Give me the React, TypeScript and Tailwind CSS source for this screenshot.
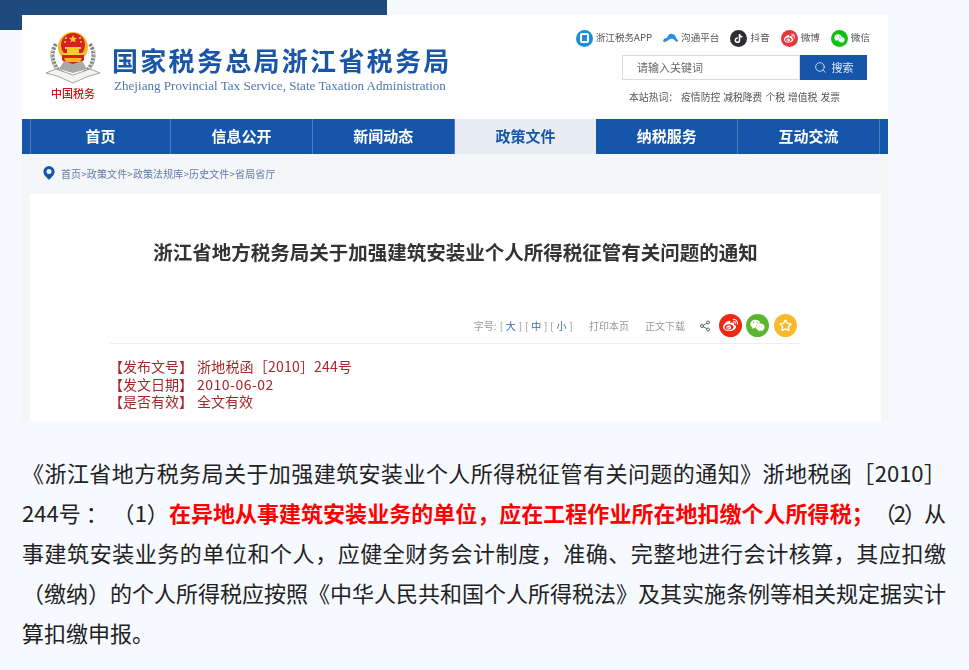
import { Search, Share2, Star } from "lucide-react";
import { FaTiktok, FaWeibo, FaWeixin } from "react-icons/fa";

const cjk = "font-['Microsoft_YaHei','Noto_Sans_CJK_SC',sans-serif]";

function Emblem() {
  return (
    <svg width="54" height="56" viewBox="0 0 54 56" className="block">
      <g fill="none" stroke="#7f8480" strokeWidth="4" strokeDasharray="2.500 1.200">
        <path d="M10 14c-7 11-3 24 9 31" />
        <path d="M44 14c7 11 3 24-9 31" />
      </g>
      <g fill="none" stroke="#c3c6c2" strokeWidth="2.500" strokeDasharray="2 1.500">
        <path d="M6 20c-2 9 2 18 9 24" />
        <path d="M48 20c2 9-2 18-9 24" />
      </g>
      <circle cx="27" cy="17" r="15" fill="#f0b91d" />
      <circle cx="27" cy="15" r="12" fill="#d91f26" />
      <g fill="#f5cf2c">
        <path d="M27 5l1.200 2.700 2.900.2-2.200 1.900.7 2.800-2.600-1.500-2.600 1.500.7-2.800-2.200-1.900 2.900-.2z" />
        <circle cx="20" cy="8" r="1.100" />
        <circle cx="34" cy="8" r="1.100" />
        <circle cx="19" cy="12" r="1" />
        <circle cx="35" cy="12" r="1" />
        <rect x="19" y="17" width="16" height="2" />
        <path d="M21 19h12v4H21z" />
        <rect x="17" y="23" width="20" height="2" />
      </g>
      <path d="M16 25h22v5c-3 3-7 5-11 5s-8-2-11-5z" fill="#d91f26" />
      <path d="M18 28h18l-2 4H20z" fill="#f0b91d" />
      <path d="M27 34l-9-3-5 8 14 4 14-4-5-8z" fill="#a9aaa6" />
      <path d="M0 43l10-4 17 6 17-6 10 4-11 3-16 7-16-7z" fill="#f4f4f1" stroke="#8f918e" strokeWidth="0.800" />
    </svg>
  );
}

function Pin() {
  return (
    <svg width="12" height="14" viewBox="0 0 12 14">
      <path d="M6 0a5.600 5.600 0 0 1 5.600 5.600C11.600 9 8 12 6 14 4 12 .4 9 .4 5.600A5.600 5.600 0 0 1 6 0z" fill="#1555aa" />
      <circle cx="6" cy="5.600" r="2.500" fill="#f5f6f8" />
    </svg>
  );
}

function TopLink({ icon, label }: { icon: React.ReactNode; label: string }) {
  return (
    <div className="flex items-center gap-[3px]">
      {icon}
      <span className="text-[9.600px] leading-none text-[#555]">{label}</span>
    </div>
  );
}

const navItems = ["信息公开", "新闻动态", "政策文件", "纳税服务", "互动交流"];

export default function App() {
  return (
    <div className={`min-h-[670px] bg-[#f6f9fe] ${cjk} overflow-hidden`}>
      <div className="h-[15px] w-[387px] bg-[#1f4a7f]" />
      <div className="flex">
        <div className="h-[15px] w-[22px] bg-[#1f4a7f]" />
        <div className="w-[866px] h-[406px] flex flex-col blur-[0.35px]">
          <header className="h-[104px] bg-white flex justify-between">
            <div className="flex pl-[24px] pt-[15px]">
              <div className="flex flex-col items-center w-[54px]">
                <Emblem />
                <span className="text-[11px] leading-[16px] font-medium text-[#c8161d] whitespace-nowrap -mt-[1px]">中国税务</span>
              </div>
              <div className="ml-[12px] pt-[13px]">
                <div className="text-[26px] leading-[34px] font-bold tracking-[2.300px] text-[#1a56a8] whitespace-nowrap">国家税务总局浙江省税务局</div>
                <div className="font-['Liberation_Serif',serif] text-[13.100px] leading-[16px] text-[#4f77b0] whitespace-nowrap pl-[2px] mt-[1px]">Zhejiang Provincial Tax Service, State Taxation Administration</div>
              </div>
            </div>
            <div className="flex flex-col items-end pt-[14px]">
              <div className="flex items-center gap-[11px] pr-[18px] h-[18px]">
                <TopLink
                  label="浙江税务APP"
                  icon={
                    <span className="w-[17px] h-[17px] rounded-full bg-[#1a8fd8] flex items-center justify-center">
                      <span className="w-[9px] h-[10px] rounded-[2px] border-2 border-white bg-[#1a8fd8]" />
                    </span>
                  }
                />
                <TopLink
                  label="沟通平台"
                  icon={
                    <svg width="15" height="10" viewBox="0 0 15 10">
                      <path d="M0 8c1-3 3-3 4-3 1-3 3-5 5-4 3 0 4 3 4 4 1 1 2 2 2 3-1 1-2 1-3-.5-2-2.500-5-2-7 0-2 1.500-4 2-5 .5z" fill="#2a8de6" />
                    </svg>
                  }
                />
                <TopLink
                  label="抖音"
                  icon={
                    <span className="w-[17px] h-[17px] rounded-full bg-[#2f2f33] flex items-center justify-center">
                      <FaTiktok className="text-white text-[9px]" />
                    </span>
                  }
                />
                <TopLink
                  label="微博"
                  icon={
                    <span className="w-[17px] h-[17px] rounded-full bg-[#e8363e] flex items-center justify-center">
                      <FaWeibo className="text-white text-[11px]" />
                    </span>
                  }
                />
                <TopLink
                  label="微信"
                  icon={
                    <span className="w-[17px] h-[17px] rounded-full bg-[#0fbf12] flex items-center justify-center">
                      <FaWeixin className="text-white text-[11px]" />
                    </span>
                  }
                />
              </div>
              <div className="flex mt-[8px] mr-[21px] h-[25px] w-[245px]">
                <div className="w-[178px] bg-white border border-[#dcdcdc] pl-[14px] flex items-center text-[11px] text-[#666]">请输入关键词</div>
                <div className="flex-1 bg-[#1555aa] flex items-center justify-center gap-[5px] text-[11px] text-[#dbe7f5]">
                  <Search size={13} strokeWidth={1.600} />
                  <span>搜索</span>
                </div>
              </div>
              <div className="flex gap-[3px] mt-[11px] mr-[48px] text-[9.800px] leading-[12px] text-[#555]">
                <span>本站热词：</span>
                <span>疫情防控</span>
                <span>减税降费</span>
                <span>个税</span>
                <span>增值税</span>
                <span>发票</span>
              </div>
            </div>
          </header>
          <nav className="h-[35px] flex bg-[#1555aa] text-white text-[15px] font-bold">
            <div className="w-[9px] border-r border-[#4a7cc0]" />
            <div className="w-[140px] flex items-center justify-center border-r border-[#4a7cc0]">首页</div>
            {navItems.map((n) => (
              <div
                key={n}
                className={
                  n === "政策文件"
                    ? "w-[141.800px] flex items-center justify-center bg-[#e8edf5] text-[#1a56a8]"
                    : "w-[141.800px] flex items-center justify-center border-r border-[#4a7cc0]"
                }
              >
                {n}
              </div>
            ))}
          </nav>
          <main className="flex-1 bg-[#f5f6f8] pl-[8px] pr-[7px] flex flex-col">
            <div className="h-[40px] flex items-center pl-[13px] pb-[2px] gap-[6px] text-[10px] text-[#5f7ba8]">
              <Pin />
              <span className="whitespace-nowrap tracking-[0.1px]">首页&gt;政策文件&gt;政策法规库&gt;历史文件&gt;省局省厅</span>
            </div>
            <section className="flex-1 bg-white">
              <h1 className="pt-[44px] text-[19.500px] leading-[28px] font-bold text-[#333] text-center whitespace-nowrap">
                浙江省地方税务局关于加强建筑安装业个人所得税征管有关问题的通知
              </h1>
              <div className="mx-[80px] mt-[48px] h-[30px] pb-[6px] border-b border-[#eeeeee] flex items-center justify-end pr-[4px] text-[10px] text-[#999]">
                <span>字号:</span>
                <span className="ml-[3px] whitespace-nowrap tracking-[0.3px]">[ <span className="text-[#3a6cb0]">大</span> ] [ <span className="text-[#3a6cb0]">中</span> ] [ <span className="text-[#3a6cb0]">小</span> ]</span>
                <span className="ml-[16px]">打印本页</span>
                <span className="ml-[16px]">正文下载</span>
                <Share2 size={12} className="ml-[14px] text-[#666]" />
                <span className="ml-[8px] w-[23px] h-[23px] rounded-full bg-[#ee2a12] flex items-center justify-center">
                  <FaWeibo className="text-white text-[15px]" />
                </span>
                <span className="ml-[4px] w-[23px] h-[23px] rounded-full bg-[#5cb531] flex items-center justify-center">
                  <FaWeixin className="text-white text-[15px]" />
                </span>
                <span className="ml-[5px] w-[23px] h-[23px] rounded-full bg-[#f8b92d] flex items-center justify-center">
                  <Star size={13} strokeWidth={2.500} className="text-white" />
                </span>
              </div>
              <div className="ml-[79px] mt-[14px] text-[14px] leading-[17.500px] text-[#a5282a]">
                <div className="flex"><span className="w-[88px]">【发布文号】</span><span className="tracking-[0.2px]">浙地税函［2010］244号</span></div>
                <div className="flex"><span className="w-[88px]">【发文日期】</span><span className="tracking-[0.5px]">2010-06-02</span></div>
                <div className="flex"><span className="w-[88px]">【是否有效】</span><span>全文有效</span></div>
              </div>
            </section>
          </main>
        </div>
      </div>
      <p className="mt-[31px] pl-[22px] pr-[23px] text-[22px] leading-[40px] text-justify [text-spacing-trim:space-all] text-[#222]">
        《浙江省地方税务局关于加强建筑安装业个人所得税征管有关问题的通知》浙地税函［2010］244号 ： （1）
        <strong className="font-bold text-[#ff0000]">在异地从事建筑安装业务的单位，应在工程作业所在地扣缴个人所得税；</strong>
        <span className="tracking-[-2px]">（2）</span>从事建筑安装业务的单位和个人，应健全财务会计制度，准确、完整地进行会计核算，其应扣缴（缴纳）的个人所得税应按照《中华人民共和国个人所得税法》及其实施条例等相关规定据实计算扣缴申报。
      </p>
    </div>
  );
}
